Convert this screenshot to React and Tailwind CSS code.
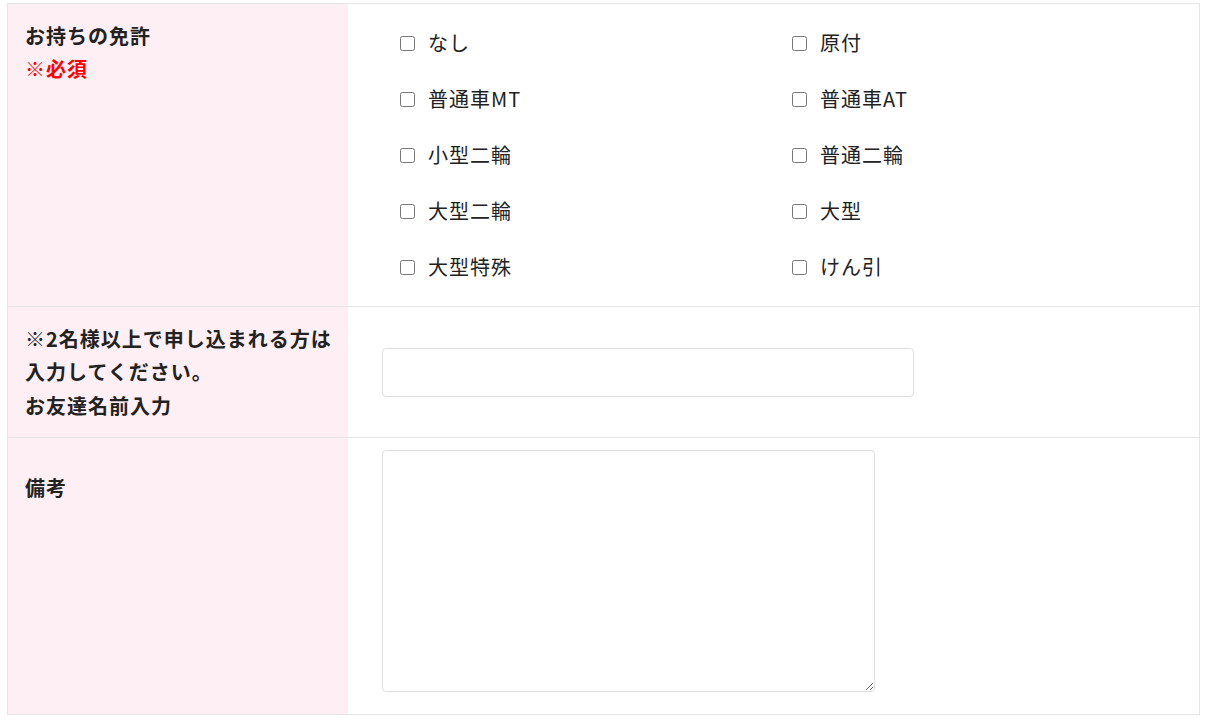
import React from 'react';

const font = { fontFamily: '"Noto Sans CJK JP", "Noto Sans", sans-serif' };

const licenses = [
  ['なし', '原付'],
  ['普通車MT', '普通車AT'],
  ['小型二輪', '普通二輪'],
  ['大型二輪', '大型'],
  ['大型特殊', 'けん引'],
];

function Check({ label }) {
  return (
    <label className="flex items-center h-[56px] text-[20px] tracking-[1px] text-[#222]">
      <input type="checkbox" className="w-[15px] h-[15px] m-0 mr-[13px] accent-gray-500" />
      {label}
    </label>
  );
}

export default function App() {
  return (
    <div className="bg-white min-h-[720px] pt-[3px] pl-[7px]" style={font}>
      <div className="w-[1193px] border border-[#e5e5e5]">
        {/* 免許 */}
        <div className="grid grid-cols-[340px_1fr] border-b border-[#e5e5e5]">
          <div className="bg-[#fdeff4] pl-[17px] pt-[15px] text-[20px] tracking-[1px] font-bold leading-[33px] text-[#222]">
            <div>お持ちの免許</div>
            <div className="text-[#ff0000]">※必須</div>
          </div>
          <div className="px-[34px] pt-[11px] pb-[11px]">
            <div className="grid grid-cols-[392px_392px] pl-[18px]">
              {licenses.flat().map((l) => (
                <Check key={l} label={l} />
              ))}
            </div>
          </div>
        </div>

        {/* お友達 */}
        <div className="grid grid-cols-[340px_1fr] border-b border-[#e5e5e5] h-[131px]">
          <div className="bg-[#fdeff4] pl-[17px] flex flex-col justify-center text-[20px] tracking-[1px] font-bold leading-[33.5px] text-[#222]">
            <div>※2名様以上で申し込まれる方は</div>
            <div>入力してください。</div>
            <div>お友達名前入力</div>
          </div>
          <div className="px-[34px] flex items-center">
            <input type="text" className="w-[532px] h-[49px] border border-[#dedede] rounded-[4px] outline-none px-3" />
          </div>
        </div>

        {/* 備考 */}
        <div className="grid grid-cols-[340px_1fr] h-[276px]">
          <div className="bg-[#fdeff4] pl-[17px] pt-[34px] text-[20px] tracking-[1px] font-bold leading-[32px] text-[#222]">
            備考
          </div>
          <div className="px-[34px] pt-[12px]">
            <textarea className="block w-[493px] h-[242px] border border-[#dedede] rounded-[4px] outline-none p-2" />
          </div>
        </div>
      </div>
    </div>
  );
}
